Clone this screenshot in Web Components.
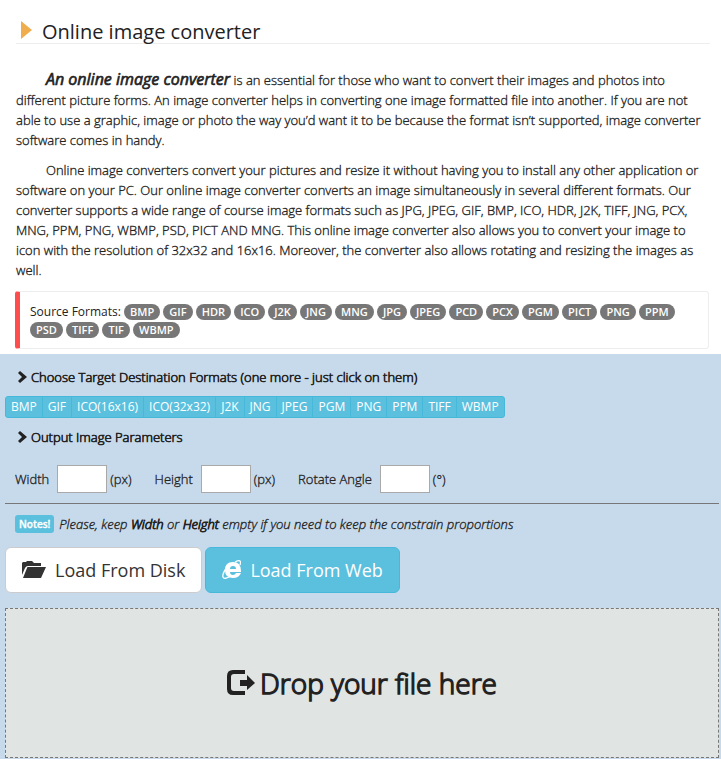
<!DOCTYPE html>
<html lang="en">
<head>
<meta charset="utf-8">
<meta name="viewport" content="width=device-width, initial-scale=1">
<title>Online image converter</title>
<style>
  body {
    margin: 0;
    background: #ffffff;
    color: #222222;
    font-family: "Open Sans", Arial, sans-serif;
    font-size: 13px;
    font-weight: 300;
    line-height: 20px;
    -webkit-text-stroke: 0.025em currentColor;
  }
</style>
</head>
<body>
<converter-page></converter-page>

<script>
class AppIcon extends HTMLElement {

  constructor() {
    super();
    const icons = {
      chevron: '<path d="M1 3 3 1 10 7 3 13 1 11 5 7Z"/>',
      folder: '<path d="M0 3 1 2H4L5 1H10L12 3H19V6H6Q4 6 3 8L0 15Z"/><path d="M6 7H24L19 18H1L5 8Q5 7 6 7Z"/>',
      browser: '<path fill-rule="evenodd" d="M11 2Q19 2 19 11V12H8Q8 15 11 15Q13 15 14 13H19Q17 18 11 18Q3 18 3 10Q3 2 11 2ZM8 9H14Q14 6 11 6Q8 6 8 9Z"/><path fill="none" stroke="currentColor" stroke-width="1.3" d="M13 2Q17 0 18 1Q19 2 18 5M5 7Q0 14 1 17Q2 20 9 16"/>',
      logout: '<path d="M18 0V4H7Q4 4 4 7V18Q4 21 7 21H18V25H6Q0 25 0 19V6Q0 0 6 0Z"/><path d="M13 10H20V5L28 13 20 20V16H13Z"/>'
    };
    const name = this.getAttribute('name');
    const boxes = { chevron: '11 14', folder: '24 20', browser: '19 20', logout: '28 26' };
    const [width, height] = boxes[name].split(' ');
    const shadowRoot = this.attachShadow({ mode: 'open' });
    shadowRoot.innerHTML = `
    <style>
    :host {
      display: inline-flex;
      flex: none;
    }
    svg {
      display: block;
      fill: currentColor;
    }
    </style>
    <svg width="${width}" height="${height}" viewBox="0 0 ${width} ${height}" aria-hidden="true">${icons[name]}</svg>
    `;
  }
}

class PageTitle extends HTMLElement {

  constructor() {
    super();
    const shadowRoot = this.attachShadow({ mode: 'open' });
    shadowRoot.innerHTML = `
    <style>
    :host {
      display: block;
      border-bottom: 1px solid #eeeeee;
    }
    h1 {
      display: flex;
      align-items: flex-start;
      gap: 10px;
      margin: 0;
      padding-left: 5px;
      font-size: 20px;
      font-weight: normal;
      line-height: 22px;
      -webkit-text-stroke: 0;
    }
    h1::before {
      content: "";
      border-left: 11px solid #f0ad4e;
      border-top: 9px solid transparent;
      border-bottom: 9px solid transparent;
    }
    </style>
    <h1><slot></slot></h1>
    `;
  }
}

class SourceFormats extends HTMLElement {

  constructor() {
    super();
    const formats = this.getAttribute('formats').split(' ');
    const shadowRoot = this.attachShadow({ mode: 'open' });
    shadowRoot.innerHTML = `
    <style>
    :host {
      display: block;
      padding: 11px 10px 9px;
      border: 1px solid #eeeeee;
      border-left: 5px solid #ff4c4c;
      border-radius: 3px;
      font-size: 12px;
      font-weight: normal;
      line-height: 18px;
      -webkit-text-stroke: 0;
    }
    .badge {
      display: inline-block;
      padding: 0 6px;
      border-radius: 8px;
      background: #777777;
      color: #ffffff;
      font-size: 11px;
      font-weight: 600;
      line-height: 16px;
    }
    </style>
    <slot></slot> ${formats.map(f => `<span class="badge">${f}</span>`).join(' ')}
    `;
  }
}

class SectionTitle extends HTMLElement {

  constructor() {
    super();
    const shadowRoot = this.attachShadow({ mode: 'open' });
    shadowRoot.innerHTML = `
    <style>
    :host {
      display: block;
      padding: 0 12px;
    }
    h2 {
      display: flex;
      align-items: center;
      gap: 3px;
      margin: 0;
      font-size: 13px;
      font-weight: 300;
      line-height: 18px;
      -webkit-text-stroke: 0.05em currentColor;
    }
    </style>
    <h2><app-icon name="chevron"></app-icon><slot></slot></h2>
    `;
  }
}

class FormatPicker extends HTMLElement {

  constructor() {
    super();
    const formats = this.getAttribute('formats').split(' ');
    const shadowRoot = this.attachShadow({ mode: 'open' });
    shadowRoot.innerHTML = `
    <style>
    :host {
      display: flex;
      flex-wrap: wrap;
    }
    button {
      margin: 0;
      padding: 1px 5px;
      border: 1px solid #46b8da;
      background: #5bc0de;
      color: #ffffff;
      font: inherit;
      font-size: 12px;
      font-weight: normal;
      line-height: 18px;
      cursor: pointer;
      -webkit-text-stroke: 0;
    }
    button + button {
      margin-left: -1px;
    }
    button:first-of-type {
      border-radius: 3px 0 0 3px;
    }
    button:last-of-type {
      border-radius: 0 3px 3px 0;
    }
    button:hover, button.active {
      background: #31b0d5;
    }
    </style>
    ${formats.map(f => `<button type="button">${f}</button>`).join('')}
    `;
    shadowRoot.querySelectorAll('button').forEach(button => {
      button.addEventListener('click', () => button.classList.toggle('active'));
    });
  }
}

class NumberField extends HTMLElement {

  constructor() {
    super();
    const shadowRoot = this.attachShadow({ mode: 'open' });
    shadowRoot.innerHTML = `
    <style>
    :host {
      display: flex;
      align-items: center;
      gap: 3px;
    }
    label {
      margin-right: 5px;
    }
    input {
      box-sizing: border-box;
      width: 50px;
      height: 28px;
      margin: 0;
      padding: 2px 4px;
      border: 1px solid #a9a9a9;
      border-radius: 0;
      background: #ffffff;
      font: inherit;
    }
    </style>
    <label for="value">${this.getAttribute('label')}</label>
    <input id="value" type="text">
    <span>${this.getAttribute('unit')}</span>
    `;
  }
}

class LoadButton extends HTMLElement {

  constructor() {
    super();
    const shadowRoot = this.attachShadow({ mode: 'open' });
    shadowRoot.innerHTML = `
    <style>
    :host {
      display: block;
    }
    button {
      display: flex;
      align-items: center;
      gap: 9px;
      padding: 10px 16px;
      border: 1px solid #cccccc;
      border-radius: 6px;
      background: #ffffff;
      color: #333333;
      font: inherit;
      font-size: 18px;
      font-weight: normal;
      line-height: 24px;
      cursor: pointer;
      -webkit-text-stroke: 0;
    }
    :host([kind="info"]) button {
      border-color: #46b8da;
      background: #5bc0de;
      color: #ffffff;
    }
    </style>
    <button type="button"><app-icon name="${this.getAttribute('icon')}"></app-icon><slot></slot></button>
    `;
  }
}

class DropZone extends HTMLElement {

  constructor() {
    super();
    const shadowRoot = this.attachShadow({ mode: 'open' });
    shadowRoot.innerHTML = `
    <style>
    :host {
      display: flex;
      align-items: center;
      justify-content: center;
      gap: 5px;
      padding: 54px 16px;
      border: 1px dashed #777777;
      background: #e0e4e3;
      font-size: 28px;
      line-height: 40px;
      -webkit-text-stroke: 0.05em currentColor;
    }
    </style>
    <app-icon name="logout"></app-icon><slot></slot>
    `;
    this.addEventListener('dragover', e => e.preventDefault());
    this.addEventListener('drop', e => e.preventDefault());
  }
}

class ConverterPage extends HTMLElement {

  constructor() {
    super();
    const shadowRoot = this.attachShadow({ mode: 'open' });
    shadowRoot.innerHTML = `
    <style>
    :host {
      display: flex;
      flex-direction: column;
      min-height: 100vh;
    }
    header {
      padding: 21px 11px 15px 16px;
    }
    article {
      padding: 10px 11px 11px 16px;
    }
    p {
      margin: 0 0 10px;
      text-indent: 30px;
    }
    p:last-child {
      margin: 0;
    }
    p em {
      font-size: 16px;
      font-weight: normal;
      -webkit-text-stroke: 0.04em currentColor;
    }
    source-formats {
      margin: 0 12px 5px 15px;
    }
    form {
      display: flex;
      flex: auto;
      flex-direction: column;
      padding: 14px 2px 1px 5px;
      background: #c7daeb;
    }
    format-picker {
      margin: 10px 0;
    }
    .fields {
      display: flex;
      flex-wrap: wrap;
      gap: 10px 23px;
      padding: 19px 10px 10px;
      border-bottom: 1px solid #777777;
    }
    .notes {
      display: flex;
      align-items: center;
      gap: 5px;
      padding: 10px;
    }
    .label {
      padding: 0 4px;
      border-radius: 3px;
      background: #5bc0de;
      color: #ffffff;
      font-size: 10px;
      font-weight: 600;
      line-height: 18px;
    }
    .notes b {
      font-weight: 300;
      -webkit-text-stroke: 0.06em currentColor;
    }
    .buttons {
      display: flex;
      flex-wrap: wrap;
      gap: 3px;
      padding: 3px 0 15px;
    }
    </style>
    <header>
      <page-title>Online image converter</page-title>
    </header>
    <article>
      <p><em>An online image converter</em> is an essential for those who want to convert their images and photos into different picture forms. An image converter helps in converting one image formatted file into another. If you are not able to use a graphic, image or photo the way you’d want it to be because the format isn’t supported, image converter software comes in handy.</p>
      <p>Online image converters convert your pictures and resize it without having you to install any other application or software on your PC. Our online image converter converts an image simultaneously in several different formats. Our converter supports a wide range of course image formats such as JPG, JPEG, GIF, BMP, ICO, HDR, J2K, TIFF, JNG, PCX, MNG, PPM, PNG, WBMP, PSD, PICT AND MNG. This online image converter also allows you to convert your image to icon with the resolution of 32x32 and 16x16. Moreover, the converter also allows rotating and resizing the images as well.</p>
    </article>
    <source-formats formats="BMP GIF HDR ICO J2K JNG MNG JPG JPEG PCD PCX PGM PICT PNG PPM PSD TIFF TIF WBMP">Source Formats:</source-formats>
    <form>
      <section-title>Choose Target Destination Formats (one more - just click on them)</section-title>
      <format-picker formats="BMP GIF ICO(16x16) ICO(32x32) J2K JNG JPEG PGM PNG PPM TIFF WBMP"></format-picker>
      <section-title>Output Image Parameters</section-title>
      <div class="fields">
        <number-field label="Width" unit="(px)"></number-field>
        <number-field label="Height" unit="(px)"></number-field>
        <number-field label="Rotate Angle" unit="(°)"></number-field>
      </div>
      <div class="notes">
        <span class="label">Notes!</span>
        <em>Please, keep <b>Width</b> or <b>Height</b> empty if you need to keep the constrain proportions</em>
      </div>
      <div class="buttons">
        <load-button icon="folder">Load From Disk</load-button>
        <load-button icon="browser" kind="info">Load From Web</load-button>
      </div>
      <drop-zone>Drop your file here</drop-zone>
    </form>
    `;
  }
}

customElements.define('app-icon', AppIcon);
customElements.define('page-title', PageTitle);
customElements.define('source-formats', SourceFormats);
customElements.define('section-title', SectionTitle);
customElements.define('format-picker', FormatPicker);
customElements.define('number-field', NumberField);
customElements.define('load-button', LoadButton);
customElements.define('drop-zone', DropZone);
customElements.define('converter-page', ConverterPage);
</script>
</body>
</html>
